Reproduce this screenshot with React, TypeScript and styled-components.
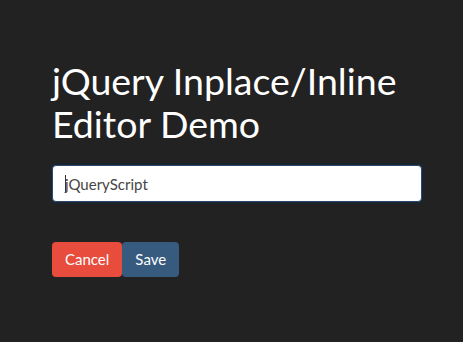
import React from 'react'
import styled, { createGlobalStyle } from 'styled-components'

const GlobalStyle = createGlobalStyle`
  html, body {
    margin: 0;
    padding: 0;
    background: #222222;
    font-family: Lato, "Open Sans", sans-serif;
  }
`

const Page = styled.div`
  padding: 59px 41px 0 52px;
`

const Title = styled.h1`
  margin: 0 0 20px;
  font-size: 37.5px;
  line-height: 43px;
  font-weight: 400;
  color: #ffffff;
`

const Field = styled.div`
  width: 370px;
  height: 37px;
  box-sizing: border-box;
  background: #ffffff;
  border: 1px solid #2a4a6b;
  border-radius: 4px;
  box-shadow: 0 0 0 2px #1b2530;
  display: flex;
  align-items: center;
  padding: 0 12px;
  font-size: 15px;
  color: #464545;
`

const Caret = styled.span`
  display: inline-block;
  width: 1px;
  height: 18px;
  background: #333;
  margin-right: -1px;
`

const Actions = styled.div`
  display: flex;
  margin-top: 40px;
`

const Button = styled.button<{ $variant: 'danger' | 'primary' }>`
  font-family: Lato, "Open Sans", sans-serif;
  font-size: 15px;
  line-height: 21px;
  padding: 6px 12px;
  border: 1px solid transparent;
  border-radius: 4px;
  color: #ffffff;
  cursor: pointer;
  background: ${(p) => (p.$variant === 'danger' ? '#e74c3c' : '#375a7f')};
`

const App: React.FC = () => {
  return (
    <>
      <GlobalStyle />
      <Page>
        <Title>jQuery Inplace/Inline Editor Demo</Title>
        <Field>
          <Caret />
          jQueryScript
        </Field>
        <Actions>
          <Button $variant='danger'>Cancel</Button>
          <Button $variant='primary'>Save</Button>
        </Actions>
      </Page>
    </>
  )
}

export default App
